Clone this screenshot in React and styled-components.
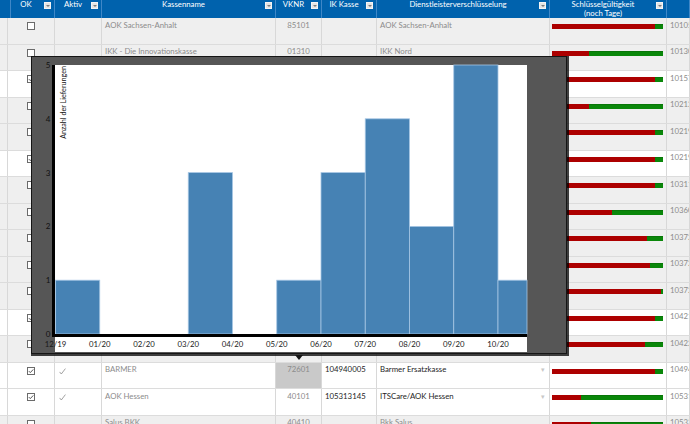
import React from "react";
import styled, { createGlobalStyle } from "styled-components";

const FONT = 'Lato, "Noto Sans", sans-serif';

const GlobalStyle = createGlobalStyle`
  html, body { margin: 0; padding: 0; background: #fff; }
  body {
    width: 690px;
    height: 424px;
    overflow: hidden;
    font-family: ${FONT};
  }
`;

const COLS = "8px 47px 47px 174px 46px 55px 173px 117px 23px";

const Page = styled.div`
  position: relative;
  width: 690px;
  height: 424px;
  overflow: hidden;
`;

const HeaderRow = styled.div`
  display: grid;
  grid-template-columns: ${COLS};
  height: 18px;
  background: #0062ad;
`;

const HeadCell = styled.div`
  position: relative;
  box-sizing: border-box;
  border-right: 1px solid #3f87c7;
  padding: 0 10px 0 0;
  color: #fff;
  font-size: 7.8px;
  line-height: 8.5px;
  text-align: center;
  white-space: nowrap;
  overflow: hidden;
`;

const FilterIcon = styled.span`
  position: absolute;
  right: 3px;
  top: 2px;
  width: 7px;
  height: 7px;
  box-sizing: border-box;
  background: #e4e4e4;
  border: 1px solid #f4f4f4;
  &::after {
    content: "";
    position: absolute;
    left: 1px;
    top: 2px;
    border-left: 2px solid transparent;
    border-right: 2px solid transparent;
    border-top: 2px solid #7c7c7c;
  }
`;

const Row = styled.div`
  display: grid;
  grid-template-columns: ${COLS};
  height: 26.5px;
  box-sizing: border-box;
  border-bottom: 1px solid #dcdcdc;
  background: ${(p) => (p.$active ? "#ffffff" : "#efefef")};
`;

const Cell = styled.div`
  position: relative;
  box-sizing: border-box;
  border-right: 1px solid #d8d8d8;
  padding: 1.5px 3px 0 ${(p) => p.$pl || 3}px;
  font-size: 7.8px;
  line-height: 10px;
  white-space: nowrap;
  overflow: hidden;
  text-align: ${(p) => p.$align || "left"};
  color: ${(p) => (p.$dark ? "#1e1e1e" : "#8c8c8c")};
  background: ${(p) => (p.$selected ? "#c9c9c9" : "transparent")};
`;

const BoxCell = styled(Cell)`
  display: flex;
  justify-content: center;
  padding-top: 4px;
`;

const TickCell = styled(Cell)`
  padding-top: 4px;
`;

const Caret = styled.span`
  position: absolute;
  right: 4px;
  top: 1.5px;
  color: #c8c8c8;
  font-size: 7px;
`;

const KeyBar = styled.div`
  display: flex;
  height: 5px;
  margin-top: 4.5px;
  background: #0a870a;
  box-shadow: inset 0 1px 0 rgba(0, 0, 0, 0.12);
`;

const KeyRed = styled.div`
  height: 100%;
  background: #ad0000;
`;

const Popup = styled.div`
  position: absolute;
  left: 31px;
  top: 56px;
  width: 536px;
  height: 298px;
  box-sizing: border-box;
  background: #565656;
  border: 1px solid #151515;
  box-shadow: 1px 1px 0 1px rgba(0, 0, 0, 0.75);
  &::after {
    content: "";
    position: absolute;
    left: 263px;
    bottom: -7px;
    border-left: 4px solid transparent;
    border-right: 4px solid transparent;
    border-top: 5px solid #151515;
  }
`;

const Check = ({ on }) => (
  <svg width="8" height="8" viewBox="0 0 8 8">
    <rect x="0.5" y="0.5" width="7" height="7" fill="#fff" stroke="#6b6b6b" />
    {on && <path d="M1.8 4.1 L3.3 5.6 L6.3 2.4" fill="none" stroke="#444" strokeWidth="0.9" />}
  </svg>
);

const Tick = () => (
  <svg width="7" height="7" viewBox="0 0 7 7">
    <path d="M0.6 3.9 L2.3 6 L6.4 0.6" fill="none" stroke="#8a8a8a" strokeWidth="0.8" />
  </svg>
);

const rows = [
  { ok: false, name: "AOK Sachsen-Anhalt", vknr: "85101", ik: "", dl: "AOK Sachsen-Anhalt", red: 0.93, nr: "10105" },
  { ok: false, name: "IKK - Die Innovationskasse", vknr: "01310", ik: "", dl: "IKK Nord", red: 0.33, nr: "10130" },
  { ok: true, name: "BKK Pfalz", vknr: "52003", ik: "105110802", dl: "BKK Pfalz", red: 0.93, nr: "10157" },
  { ok: false, name: "Audi BKK", vknr: "61210", ik: "", dl: "Audi BKK", red: 0.33, nr: "10212" },
  { ok: false, name: "BKK Linde", vknr: "45504", ik: "", dl: "BKK Linde", red: 0.93, nr: "10219" },
  { ok: true, name: "DAK-Gesundheit", vknr: "48698", ik: "101560000", dl: "DAK-Gesundheit", red: 0.93, nr: "10219" },
  { ok: false, name: "hkk", vknr: "02702", ik: "", dl: "hkk", red: 0.93, nr: "10311" },
  { ok: false, name: "Mobil Krankenkasse", vknr: "75202", ik: "", dl: "Mobil Krankenkasse", red: 0.54, nr: "10360" },
  { ok: false, name: "SBK", vknr: "67208", ik: "", dl: "SBK", red: 0.86, nr: "10372" },
  { ok: false, name: "BKK VBU", vknr: "13301", ik: "", dl: "BKK VBU", red: 0.88, nr: "10372" },
  { ok: false, name: "KKH", vknr: "23601", ik: "", dl: "KKH", red: 0.98, nr: "10372" },
  { ok: true, name: "Techniker Krankenkasse", vknr: "48107", ik: "101575519", dl: "Techniker Krankenkasse", red: 0.93, nr: "10421" },
  { ok: false, name: "IKK classic", vknr: "32701", ik: "", dl: "IKK classic", red: 0.84, nr: "10422" },
  { ok: true, name: "BARMER", vknr: "72601", ik: "104940005", dl: "Barmer Ersatzkasse", red: 0.93, nr: "10494", sel: true },
  { ok: true, name: "AOK Hessen", vknr: "40101", ik: "105313145", dl: "ITSCare/AOK Hessen", red: 0.26, nr: "10531" },
  { ok: false, name: "Salus BKK", vknr: "40410", ik: "", dl: "Bkk Salus", red: 0.35, nr: "10533" },
];

const headers = [
  { label: "", icon: false },
  { label: "OK", icon: true },
  { label: "Aktiv", icon: true },
  { label: "Kassenname", icon: true },
  { label: "VKNR", icon: true },
  { label: "IK Kasse", icon: true },
  { label: "Dienstleisterverschlüsselung", icon: true },
  { label: ["Schlüsselgültigkeit", "(noch Tage)"], icon: true },
  { label: "", icon: false },
];

const months = ["12/19", "01/20", "02/20", "03/20", "04/20", "05/20", "06/20", "07/20", "08/20", "09/20", "10/20"];
const counts = [1, 0, 0, 3, 0, 1, 3, 4, 2, 5, 1];

const BASE = 277;
const UNIT = 53.8;
const STEP = 44.25;
const X0 = 23.5;
const RIGHT = 495;

const Chart = () => (
  <svg width="534" height="296" viewBox="0 0 534 296" fontFamily={FONT}>
    <rect x="23" y="8" width="472" height="287" fill="#fff" />
    {counts.map((c, i) => {
      if (!c) return null;
      const x = X0 + STEP * i;
      const w = Math.min(STEP, RIGHT - x);
      const h = c * UNIT;
      return (
        <rect key={i} x={x} y={BASE - h} width={w} height={h} fill="#4682b4" stroke="#a6c6e4" strokeWidth="0.8" />
      );
    })}
    <rect x="20" y="8" width="3" height="272" fill="#000" />
    <rect x="20" y="277" width="475" height="3" fill="#000" />
    {[0, 1, 2, 3, 4, 5].map((v) => (
      <text key={v} x="18.5" y={BASE - v * UNIT + 3} fontSize="8" textAnchor="end" fill="#111">
        {v}
      </text>
    ))}
    {months.map((m, i) => (
      <text key={m} x={X0 + STEP * i} y="289.5" fontSize="7.8" textAnchor="middle" fill="#1a1a1a">
        {m}
      </text>
    ))}
    <text transform="translate(33.5 9) rotate(-90)" fontSize="7.2" textAnchor="end" fill="#111">
      Anzahl der Lieferungen
    </text>
  </svg>
);

export default function App() {
  return (
    <Page>
      <GlobalStyle />
      <HeaderRow>
        {headers.map((h, i) => (
          <HeadCell key={i}>
            {Array.isArray(h.label) ? (
              h.label.map((l) => <div key={l}>{l}</div>)
            ) : (
              h.label
            )}
            {h.icon && <FilterIcon />}
          </HeadCell>
        ))}
      </HeaderRow>
      {rows.map((r, i) => (
        <Row key={i} $active={r.ok}>
          <Cell />
          <BoxCell>
            <Check on={r.ok} />
          </BoxCell>
          <TickCell $pl={4}>{r.ok && <Tick />}</TickCell>
          <Cell>{r.name}</Cell>
          <Cell $align="center" $selected={r.sel}>{r.vknr}</Cell>
          <Cell $dark>{r.ik}</Cell>
          <Cell $dark={r.ok}>
            {r.dl}
            {r.ok && <Caret>▾</Caret>}
          </Cell>
          <Cell $pl={2}>
            <KeyBar>
              <KeyRed style={{ width: `${r.red * 100}%` }} />
            </KeyBar>
          </Cell>
          <Cell>{r.nr}</Cell>
        </Row>
      ))}
      <Popup>
        <Chart />
      </Popup>
    </Page>
  );
}
